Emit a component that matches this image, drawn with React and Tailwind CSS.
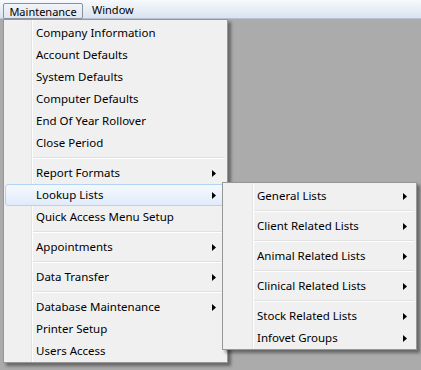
import React from 'react';

const mainItems = [
    { label: 'Company Information' },
    { label: 'Account Defaults' },
    { label: 'System Defaults' },
    { label: 'Computer Defaults' },
    { label: 'End Of Year Rollover' },
    { label: 'Close Period' },
    { sep: true },
    { label: 'Report Formats', sub: true },
    { label: 'Lookup Lists', sub: true, active: true },
    { label: 'Quick Access Menu Setup' },
    { sep: true },
    { label: 'Appointments', sub: true },
    { sep: true },
    { label: 'Data Transfer', sub: true },
    { sep: true },
    { label: 'Database Maintenance', sub: true },
    { label: 'Printer Setup' },
    { label: 'Users Access' },
];

const lookupItems = [
    { label: 'General Lists', sub: true },
    { sep: true },
    { label: 'Client Related Lists', sub: true },
    { sep: true },
    { label: 'Animal Related Lists', sub: true },
    { sep: true },
    { label: 'Clinical Related Lists', sub: true },
    { sep: true },
    { label: 'Stock Related Lists', sub: true },
    { label: 'Infovet Groups', sub: true },
];

const Arrow = () => (
    <svg width="4" height="7" viewBox="0 0 4 7" className="shrink-0">
        <path d="M0 0 L4 3.5 L0 7 Z" fill="#000" />
    </svg>
);

// Win7 style popup menu
const PopupMenu = ({ items, gutter, textPad, arrowPad, className }) => (
    <div
        className={`absolute border border-[#979797] bg-[#f0f0f0] pl-[1px] pr-[2px] pt-[2px] shadow-[3px_3px_3px_rgba(0,0,0,0.4)] ${className}`}
    >
        <div className="relative">
            {/* gutter */}
            <div
                className="absolute top-[-2px] bottom-0 w-[2px] border-l border-[#e2e3e3]"
                style={{ left: gutter }}
            >
                <div className="h-full w-px bg-white" />
            </div>
            {items.map((item, i) =>
                item.sep ? (
                    <div key={i} className="h-[8px] flex items-center" style={{ paddingLeft: gutter + 1 }}>
                        <div className="w-full h-[2px] border-t border-[#e0e0e0] bg-white" />
                    </div>
                ) : (
                    <div
                        key={i}
                        className={`relative h-[22px] flex items-center justify-between rounded-[3px] border ${item.active
                            ? 'border-[#b3d2f6] bg-gradient-to-b from-[#f5f9fe] to-[#e0ebfa]'
                            : 'border-transparent'
                            }`}
                        style={{ paddingLeft: textPad, paddingRight: arrowPad }}
                    >
                        <span className="text-black leading-none">{item.label}</span>
                        {item.sub && <Arrow />}
                    </div>
                )
            )}
        </div>
    </div>
);

export default function App() {
    return (
        <div
            className="relative w-[421px] h-[370px] bg-[#ababab] overflow-hidden text-[11.5px]"
            style={{ fontFamily: '"Noto Sans", "Open Sans", sans-serif' }}
        >
            {/* Menu bar */}
            <div className="h-[19px] flex items-stretch bg-gradient-to-b from-[#f7f9fd] to-[#dae3f1] border-b border-[#b6c2d4] text-[11px]">
                <div className="relative z-10 ml-[3px] mt-[3px] mb-[-1px] w-[80px] flex items-center justify-center border border-[#8a919b] rounded-[2px] bg-gradient-to-b from-[#f1f4f9] to-[#e1e7f0] text-black leading-none">
                    Maintenance
                </div>
                <div className="pl-[9px] flex items-center text-black leading-none">Window</div>
            </div>

            <PopupMenu
                items={mainItems}
                gutter={26}
                textPad={30}
                arrowPad={8}
                className="left-[3px] top-[19px] w-[225px]"
            />

            <PopupMenu
                items={lookupItems}
                gutter={28}
                textPad={32}
                arrowPad={6}
                className="left-[222px] top-[182px] w-[195px]"
            />
        </div>
    );
}
